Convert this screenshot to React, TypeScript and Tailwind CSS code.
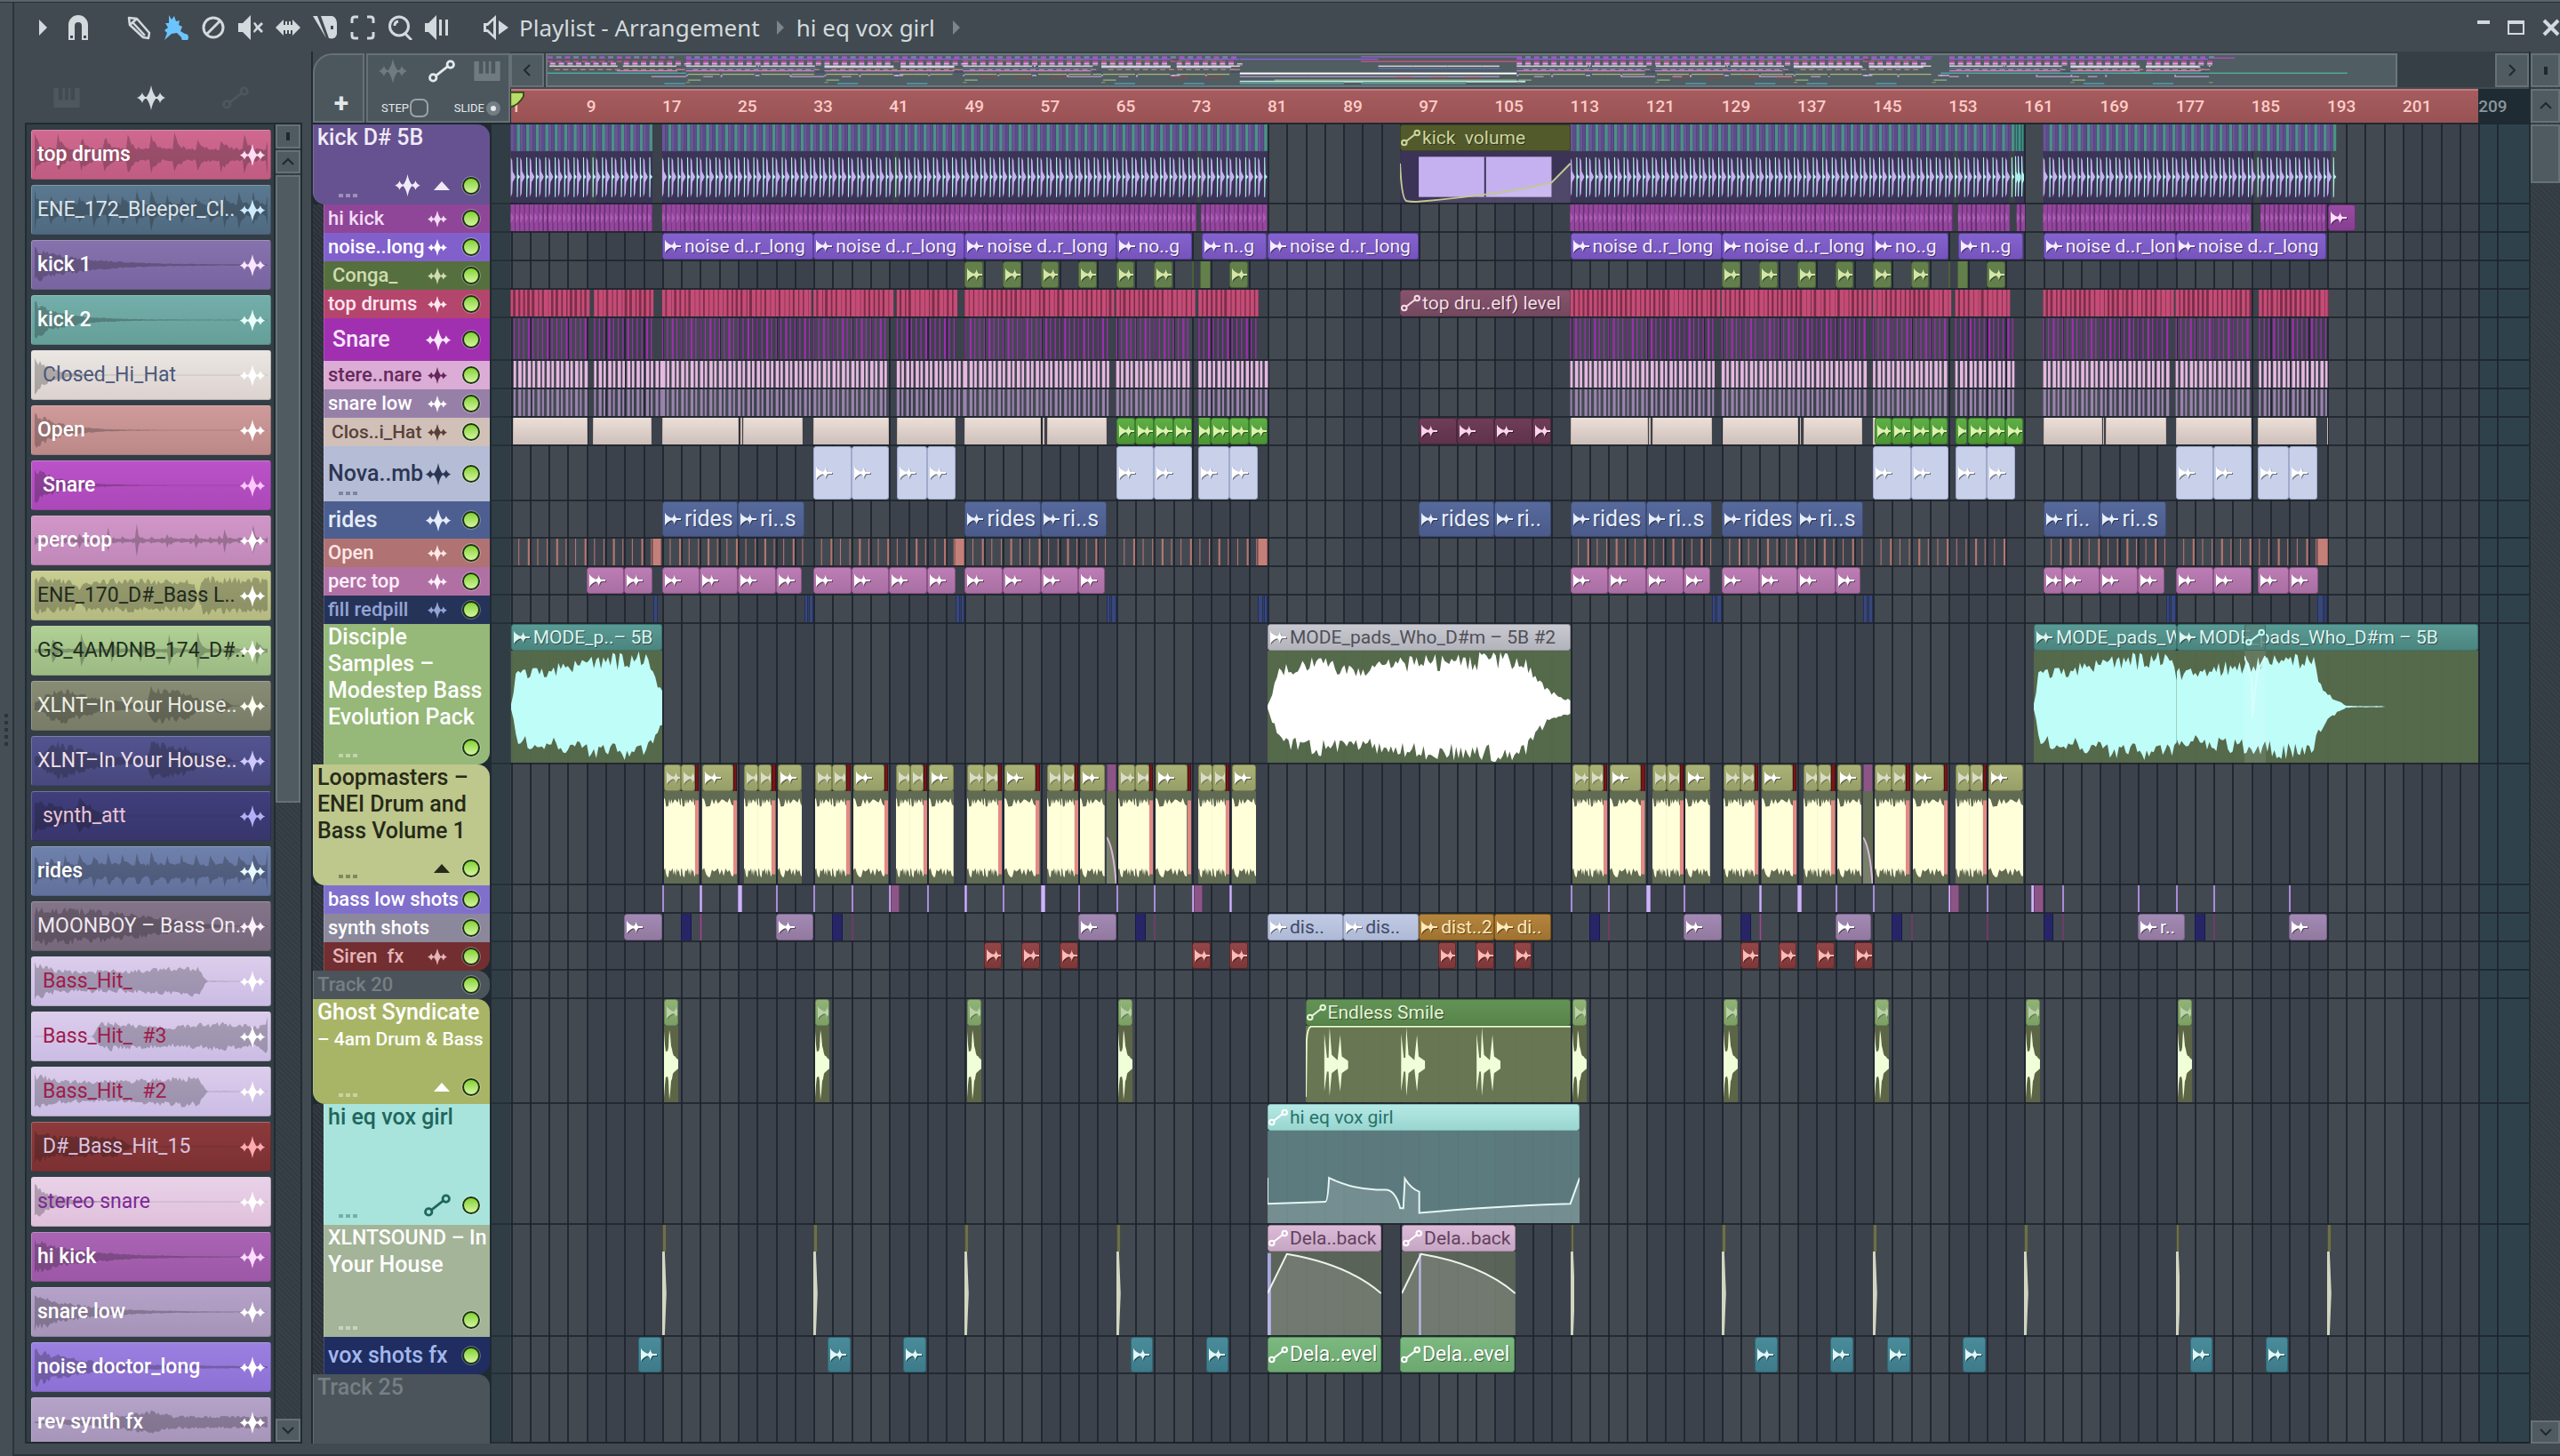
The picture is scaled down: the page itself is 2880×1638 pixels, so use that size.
import React, { useState } from 'react';
import clsx from 'clsx';

// The lane shows this many bars from edge to edge
const SPAN = 213.4;

type Clip = {
    s: number;
    e: number;
    label?: string;
    tone: string;
    icon?: 'wave' | 'auto' | 'faint';
    body?: 'pad' | 'padCut' | 'padEnd' | 'pad2' | 'loop' | 'ghost' | 'smile' | 'eq' | 'delay' | 'delay2' | 'kickvol' | 'kickfill' | 'xlnt' | 'red' | 'fade' | 'dip';
};

type Track = {
    name: string;
    lines?: { text: string; size: string }[];
    height: string;
    bg: string;
    text: string;
    child?: boolean;
    big?: boolean;
    round?: string;
    wave?: boolean;
    auto?: boolean;
    arrow?: boolean;
    dots?: boolean;
    noLed?: boolean;
    pad?: boolean;
    mini: string;
    dense?: 'kick' | 'hikick' | 'drums' | 'snare' | 'stereo' | 'low' | 'open';
    segs?: number[][];
    clips?: Clip[];
};

const repeat = (list: number[][], base: Omit<Clip, 's' | 'e'>): Clip[] => list.map(([s, e]) => ({ s, e, ...base }));

// Bar 1 starts a hair inside the lane
const place = (s: number, e: number) => ({
    left: `${((s - 0.94) / SPAN) * 100}%`,
    width: `${((e - s) / SPAN) * 100}%`,
});

// Cheap repeatable noise, so the wave forms stay the same between renders
const noise = (seed: number) => {
    let n = seed * 7919 + 17;
    return () => {
        n = (n * 16807) % 2147483647;
        return n / 2147483647;
    };
};

const wavePath = (seed: number, steps: number, env: (t: number) => number, rough = 0.35) => {
    const rnd = noise(seed);
    const top: string[] = [];
    const bottom: string[] = [];
    for (let i = 0; i <= steps; i++) {
        const t = i / steps;
        const a = env(t) * (1 - rough * rnd()) * 50;
        const b = env(t) * (1 - rough * rnd()) * 50;
        const x = ((i / steps) * 100).toFixed(2);
        top.push(`${x},${(50 - a).toFixed(1)}`);
        bottom.unshift(`${x},${(50 + b).toFixed(1)}`);
    }
    return `M${top.join('L')}L${bottom.join('L')}Z`;
};

const decay = (k: number, base = 0.02) => (t: number) => Math.exp(-t * k) * 0.9 + base;

const points = (list: number[][]) => (t: number) => {
    for (let i = 1; i < list.length; i++) {
        if (t <= list[i][0]) {
            const [x0, y0] = list[i - 1];
            const [x1, y1] = list[i];
            return y0 + ((t - x0) / (x1 - x0 || 1)) * (y1 - y0);
        }
    }
    return list[list.length - 1][1];
};

const hits = (n: number, base: number) => (t: number) => base + (1 - base) * Math.exp(-((t * n) % 1) * 5);

/* ---------- icons ---------- */

const WaveIcon = ({ className }: { className?: string }) => (
    <svg viewBox="0 0 32 28" className={className} fill="currentColor" aria-hidden="true">
        <path d="M16 0Q17.6 9 22 14Q17.6 19 16 28Q14.4 19 10 14Q14.4 9 16 0Z" />
        <path d="M6 8Q7 12.2 11 14Q7 15.8 6 20Q4.8 15.8 0 14Q4.8 12.2 6 8ZM26 8Q25 12.2 21 14Q25 15.8 26 20Q27.2 15.8 32 14Q27.2 12.2 26 8Z" />
        <rect x="4" y="13" width="24" height="2" />
    </svg>
);

const ClipIcon = ({ className }: { className?: string }) => (
    <svg viewBox="0 0 20 16" className={clsx('shrink-0 drop-shadow-[1px_1px_0_rgba(0,0,0,0.45)]', className)} fill="currentColor" aria-hidden="true">
        <path d="M0 0Q3 5 9 7V9Q3 11 0 16Z" />
        <path d="M12 1Q13 6 15 7H20V9H15Q13 10 12 15Q11 10 8 9V7Q11 6 12 1Z" />
    </svg>
);

const NodeIcon = ({ className }: { className?: string }) => (
    <svg viewBox="0 0 32 28" className={className} fill="none" stroke="currentColor" strokeWidth="3" aria-hidden="true">
        <circle cx="5.5" cy="22" r="4" />
        <circle cx="26.5" cy="6" r="4" />
        <path d="M9 19.5L23 8.5" />
    </svg>
);

const PianoIcon = ({ className }: { className?: string }) => (
    <svg viewBox="0 0 32 24" className={className} fill="currentColor" aria-hidden="true">
        <path d="M0 0H6V15H11V0H14V15H18V0H21V15H26V0H32V24H0Z" />
    </svg>
);

const tools = [
    { name: 'Snap', gap: 'mr-[40px]', art: <path d="M3 28V11A10.5 10.5 0 0 1 25 11V28H18V12A4 4 0 0 0 10 12V28ZM5 23V26H8V23ZM20 23V26H23V23Z" fillRule="evenodd" /> },
    { name: 'Draw', gap: 'mr-[14px]', art: <path d="M3 3L12 4L26 20L25 26L19 25L4 11ZM8 9L21 23M12 4L4 11" fill="none" stroke="currentColor" strokeWidth="2.5" strokeLinejoin="round" /> },
    { name: 'Paint', gap: 'mr-[14px]', blue: true, art: <path d="M6 0L9 5L12 1L14 7L18 6L17 11L21 13L19 18L24 21A4 4 0 1 1 20 25L15 20L9 21L1 28L4 20L1 17L5 14L2 9L6 9Z" /> },
    { name: 'Delete', gap: 'mr-[14px]', art: <path d="M14 3A11 11 0 1 1 14 25A11 11 0 1 1 14 3M6 22L22 6" fill="none" stroke="currentColor" strokeWidth="3" /> },
    { name: 'Mute', gap: 'mr-[14px]', art: <path d="M0 9H5L14 0V28L5 19H0ZM17 9L19 8L22 12L26 8L28 10L24 14L28 18L26 20L22 16L18 20L17 18L20 14Z" /> },
    { name: 'Slip', gap: 'mr-[14px]', art: <path d="M0 14L9 5V11H11V7H13V11H15V7H17V11H19V5L28 14L19 23V17H17V21H15V17H13V21H11V17H9V23Z" /> },
    { name: 'Slice', gap: 'mr-[14px]', art: <path d="M0 1H5L15 26ZM9 1H22Q27 3 27 10V21Q26 28 18 26ZM20 12V16H23V12Z" fillRule="evenodd" /> },
    { name: 'Select', gap: 'mr-[14px]', art: <path d="M2 9V5Q2 2 5 2H9M19 2H23Q26 2 26 5V9M26 19V23Q26 26 23 26H19M9 26H5Q2 26 2 23V19" fill="none" stroke="currentColor" strokeWidth="3" /> },
    { name: 'Zoom', gap: 'mr-[14px]', art: <path d="M13 2A10 10 0 1 1 13 23A10 10 0 1 1 13 2M20 21L27 28M8 12A5 5 0 0 1 12 7" fill="none" stroke="currentColor" strokeWidth="3" /> },
    { name: 'Playback', gap: 'mr-[38px]', art: <path d="M0 9H4L13 0V28L4 19H0ZM16 5H19V23H16ZM23 5H26V23H23Z" /> },
    { name: 'Options', gap: 'mr-0', art: <path d="M0 9H4L14 0V28L4 19H0ZM3 12V16H5L11 22V6L5 12ZM17 6L28 14L17 22Z" fillRule="evenodd" /> },
];

/* ---------- sample browser ---------- */

const samples = [
    { name: 'top drums', look: 'from-[#d06890] to-[#bf5c80] text-white', icon: 'text-[#ffdcf5]', env: hits(10, 0.3), bold: true },
    { name: 'ENE_172_Bleeper_Cl..', look: 'from-[#5a7890] to-[#4f6a80] text-[#dfe5ea]', icon: 'text-[#cdeaff]', env: hits(16, 0.3) },
    { name: 'kick 1', look: 'from-[#8672ac] to-[#7864a0] text-white', icon: 'text-[#fbe4ff]', env: decay(5), bold: true },
    { name: 'kick 2', look: 'from-[#74aeaa] to-[#649f99] text-white', icon: 'text-[#eafffb]', env: decay(8), bold: true },
    { name: 'Closed_Hi_Hat', look: 'from-[#eae6e2] to-[#dcd3cf] text-[#4c587c]', icon: 'text-white', env: decay(14, 0.01), pad: true },
    { name: 'Open', look: 'from-[#cf9a9a] to-[#bd8888] text-white', icon: 'text-white', env: decay(9, 0.01), bold: true },
    { name: 'Snare', look: 'from-[#bb52c8] to-[#ab48b8] text-white', icon: 'text-[#ffc6ff]', env: decay(9, 0.01), pad: true, bold: true },
    { name: 'perc top', look: 'from-[#d096c8] to-[#c088b8] text-white', icon: 'text-white', env: (t: number) => 0.08 + 0.9 * Math.exp(-((t * 8 + 0.5) % 1) * 22) + 0.15 * Math.exp(-((t * 24) % 1) * 5), bold: true },
    { name: 'ENE_170_D#_Bass L..', look: 'from-[#c8ce90] to-[#b4ba80] text-[#1f2a20]', icon: 'text-white', env: points([[0, 0.9], [0.18, 0.7], [0.19, 0.3], [0.22, 0.8], [0.68, 0.75], [0.7, 0.05], [0.72, 0.9], [1, 0.8]]) },
    { name: 'GS_4AMDNB_174_D#..', look: 'from-[#b0d094] to-[#9cba84] text-[#1f3020]', icon: 'text-white', env: (t: number) => 0.1 + 0.8 * Math.exp(-((t * 8 + 0.4) % 1) * 10) },
    { name: 'XLNT–In Your House..', look: 'from-[#888c74] to-[#787c68] text-[#eceee4]', icon: 'text-[#fffff0]', env: points([[0, 0.2], [0.1, 0.9], [0.3, 0.3], [0.48, 0.1], [0.5, 0.9], [0.65, 0.7], [0.75, 0.1], [0.8, 0.4], [0.85, 0.02], [1, 0.02]]) },
    { name: 'XLNT–In Your House..', look: 'from-[#525490] to-[#48487e] text-[#eedfe8]', icon: 'text-[#cfc8ff]', env: points([[0, 0.2], [0.1, 0.9], [0.3, 0.3], [0.48, 0.1], [0.5, 0.9], [0.65, 0.7], [0.75, 0.1], [0.8, 0.4], [0.85, 0.02], [1, 0.02]]) },
    { name: 'synth_att', look: 'from-[#403e7c] to-[#38366c] text-[#e8c4d4]', icon: 'text-[#b4b0f8]', env: points([[0, 0.9], [0.1, 0.5], [0.17, 0.3], [0.19, 0.9], [0.3, 0.1], [0.35, 0.01], [1, 0.01]]), pad: true },
    { name: 'rides', look: 'from-[#6e80ac] to-[#61719c] text-white', icon: 'text-[#e8f8ff]', env: hits(16, 0.35), bold: true },
    { name: 'MOONBOY – Bass On..', look: 'from-[#84748a] to-[#77687c] text-[#f1e8ef]', icon: 'text-[#fff0fa]', env: points([[0, 0.9], [0.25, 0.8], [0.5, 0.5], [0.7, 0.15], [0.85, 0.03], [1, 0.02]]) },
    { name: 'Bass_Hit_', look: 'from-[#dccdec] to-[#cbbce4] text-[#a01c4c]', icon: 'text-white', env: points([[0, 0.9], [0.1, 0.55], [0.4, 0.55], [0.7, 0.75], [0.74, 0.02], [1, 0.01]]), pad: true },
    { name: 'Bass_Hit_  #3', look: 'from-[#dccdec] to-[#cbbce4] text-[#a01c4c]', icon: 'text-white', env: points([[0, 0.01], [0.25, 0.01], [0.28, 0.7], [0.6, 0.5], [0.8, 0.7], [0.96, 0.5], [1, 0.9]]), pad: true },
    { name: 'Bass_Hit_  #2', look: 'from-[#dccdec] to-[#cbbce4] text-[#a01c4c]', icon: 'text-white', env: points([[0, 0.9], [0.1, 0.55], [0.4, 0.55], [0.7, 0.75], [0.74, 0.02], [1, 0.01]]), pad: true },
    { name: 'D#_Bass_Hit_15', look: 'from-[#8c3a3c] to-[#7c3032] text-[#d8c4e0]', icon: 'text-[#ffaab0]', env: points([[0, 0.8], [0.1, 0.5], [0.35, 0.5], [0.42, 0.02], [1, 0.01]]), pad: true },
    { name: 'stereo snare', look: 'from-[#e8d2e8] to-[#e0c0dc] text-[#7c2898]', icon: 'text-white', env: decay(12, 0.01) },
    { name: 'hi kick', look: 'from-[#a964b4] to-[#9c58a6] text-white', icon: 'text-[#ffdcff]', env: decay(5, 0.01), bold: true },
    { name: 'snare low', look: 'from-[#b4a2c8] to-[#a693b8] text-white', icon: 'text-white', env: decay(5, 0.01), bold: true },
    { name: 'noise doctor_long', look: 'from-[#9c80e0] to-[#8c70d4] text-white', icon: 'text-white', env: decay(5, 0.05), bold: true },
    { name: 'rev synth fx', look: 'from-[#b4a2c8] to-[#a693b8] text-white', icon: 'text-white', env: points([[0, 0.04], [0.25, 0.2], [0.5, 0.55], [0.6, 0.3], [1, 0.3]]), bold: true },
];

/* ---------- tracks ---------- */

const kickSegs = [[1, 9.4], [10, 16], [17, 41.4], [42, 73.5], [74, 81], [113, 153.5], [154, 159.4], [163, 185.1], [186, 193.4]];
const drumSegs = [[1, 9.3], [9.8, 16], [17, 32.7], [33, 41.3], [41.8, 48], [49, 64.8], [65, 73.2], [73.7, 80], [113, 128.8], [129, 144.8], [145, 153.2], [153.7, 159.4], [163, 176.7], [177, 185], [185.8, 193.2]];
const snareSegs = [[1.3, 9.2], [9.8, 16], [17, 32.6], [33, 41], [41.8, 48], [49, 64.5], [65, 73], [73.7, 80], [113, 128.5], [129, 144.4], [145, 153], [153.7, 160], [163, 176.5], [177, 185], [185.8, 193]];
const stereoSegs = [[1.3, 9.2], [9.8, 17], [17, 32.6], [33, 41], [41.8, 49], [49, 64.5], [65, 73], [73.7, 81], [113, 128.5], [129, 144.4], [145, 153], [153.7, 160], [163, 176.5], [177, 185], [185.8, 193]];
const openSegs = [[1.8, 16], [17.8, 32], [33.8, 48], [49.8, 64], [65.8, 80], [113.8, 128], [129.8, 144], [145.8, 159], [163.8, 176], [177.8, 192]];

const purple = 'border-[#5b3fa4] bg-linear-to-b from-[#8563cf] to-[#7654bb] text-[#f4ecff]';
const conga = 'border-[#4b6138] bg-[#627f4c] text-[#d3e6a8]';
const cream = 'border-[#c9b8b0] bg-linear-to-b from-[#ecdfd8] to-[#cdbfb9] text-white';
const green = 'border-[#3b7f2c] bg-linear-to-b from-[#5fae45] to-[#4c9534] text-[#dcf3b0]';
const maroon = 'border-[#4c2740] bg-linear-to-b from-[#6e3d58] to-[#60324c] text-[#fcd3ec]';
const pale = 'border-[#a0abca] bg-[#c8d0ea] text-white';
const blue = 'border-[#3b4b78] bg-linear-to-b from-[#566a9b] to-[#4b5b8b] text-[#e7eefc]';
const salmon = 'border-[#a2605c] bg-[#c28079] text-white';
const pink = 'border-[#8a5285] bg-linear-to-b from-[#bc7db4] to-[#a96fa3] text-white';
const navy = 'border-[#22305f] bg-[#38477b] text-white';
const teal = 'border-[#3a7470] bg-linear-to-b from-[#5a9a94] to-[#4b857f] text-[#dcf5ef]';
const silver = 'border-[#94949c] bg-linear-to-b from-[#c9c9d1] to-[#b3b3bc] text-[#4f5058]';
const olive = 'border-[#7b814d] bg-linear-to-b from-[#abb277] to-[#969f68] text-white';
const red = 'border-[#4c0e12] bg-[#7b1519] text-white';
const mauve = 'border-[#6c3c6c] bg-[#8b5585] text-[#c99ac4]';
const lilac = 'border-[#a98cd8] bg-[#cbb6f5] text-white';
const synth = 'border-[#76628c] bg-linear-to-b from-[#a28ab4] to-[#93799f] text-white';
const indigo = 'border-[#161a4a] bg-[#272566] text-[#6a6cb0]';
const dist = 'border-[#8f9bbd] bg-linear-to-b from-[#c2cbe4] to-[#aeb9d6] text-[#414a69]';
const gold = 'border-[#7a5518] bg-linear-to-b from-[#b3853e] to-[#a07230] text-[#ffe9b8]';
const siren = 'border-[#5f2728] bg-linear-to-b from-[#934648] to-[#7d3738] text-[#ffb9b6]';
const leaf = 'border-[#668a52] bg-linear-to-b from-[#92b377] to-[#7c9f64] text-[#dcecd0]';
const forest = 'border-[#42703a] bg-linear-to-b from-[#639257] to-[#588449] text-[#e6f5d8]';
const aqua = 'border-[#82bdb8] bg-linear-to-b from-[#b6e9e5] to-[#99d5d0] text-[#27736c]';
const rose = 'border-[#a883a4] bg-linear-to-b from-[#dbbbd8] to-[#c6a7c3] text-[#63405f]';
const mint = 'border-[#4f8f54] bg-linear-to-b from-[#7bb980] to-[#6ca86f] text-white';
const sea = 'border-[#2c6878] bg-linear-to-b from-[#4a8c9b] to-[#3e7b8a] text-[#dff7f7]';
const moss = 'border-[#4a4d35] bg-[#6c6f50] text-white';
const violet = 'border-[#6a2f74] bg-linear-to-b from-[#9a4ba4] to-[#863f90] text-[#ffdcff]';

const loopGroup = (b: number, last = 14.8): Clip[] => [
    { s: b + 0.2, e: b + 2, tone: olive, icon: 'faint', body: 'loop' },
    { s: b + 2, e: b + 3.5, tone: olive, icon: 'faint', body: 'loop' },
    { s: b + 3.5, e: b + 3.9, tone: red, body: 'red' },
    { s: b + 4.2, e: b + 7.5, tone: olive, icon: 'wave', body: 'loop' },
    { s: b + 7.5, e: b + 7.9, tone: red, body: 'red' },
    { s: b + 8.7, e: b + 10.2, tone: olive, icon: 'faint', body: 'loop' },
    { s: b + 10.2, e: b + 11.6, tone: olive, icon: 'faint', body: 'loop' },
    { s: b + 11.6, e: b + 12, tone: red, body: 'red' },
    { s: b + 12.2, e: b + last, tone: olive, icon: 'wave', body: 'loop' },
];

const at = (starts: number[], w: number) => starts.map((s) => [s, s + w]);

const tracks: Track[] = [
    {
        name: 'kick D# 5B', height: 'h-[90px]', bg: 'bg-[#665290]', text: 'text-[#f0eaf8]', big: true, round: 'rounded-tr-[14px] rounded-bl-[14px]', wave: true, arrow: true, dots: true, mini: '#9a62c8',
        dense: 'kick', segs: kickSegs,
        clips: [
            { s: 95, e: 113, label: 'kick  volume', tone: 'border-[#3d441f] bg-[#525a2c] text-[#ccd49c]', icon: 'auto', body: 'kickvol' },
            ...repeat([[160, 160.32], [160.32, 160.66], [160.66, 161]], { tone: 'border-[#2d6c66] bg-[#4a938a] text-white', body: 'kickfill' }),
        ],
    },
    {
        name: 'hi kick', height: 'h-[32px]', bg: 'bg-[#8f4698]', text: 'text-[#f3dcf6]', child: true, wave: true, mini: '#b050c0',
        dense: 'hikick', segs: [[1, 16], [17, 73.5], [74, 80.9], [113, 153.5], [154, 159.4], [160.2, 161], [163, 184.9], [186, 193]],
        clips: [{ s: 193.1, e: 196, tone: violet, icon: 'wave' }],
    },
    {
        name: 'noise..long', height: 'h-[32px]', bg: 'bg-[#8160cc]', text: 'text-white', child: true, wave: true, mini: '#8c60e0',
        clips: [
            ...repeat([[17, 33], [33, 49], [49, 65]], { label: 'noise d..r_long', tone: purple, icon: 'wave' }),
            { s: 65, e: 73, label: 'no..g', tone: purple, icon: 'wave' },
            { s: 74, e: 80.9, label: 'n..g', tone: purple, icon: 'wave' },
            ...repeat([[81, 97], [113, 129], [129, 145]], { label: 'noise d..r_long', tone: purple, icon: 'wave' }),
            { s: 145, e: 153, label: 'no..g', tone: purple, icon: 'wave' },
            { s: 154, e: 160.9, label: 'n..g', tone: purple, icon: 'wave' },
            ...repeat([[163, 177], [177, 192.9]], { label: 'noise d..r_long', tone: purple, icon: 'wave' }),
        ],
    },
    {
        name: 'Conga_', height: 'h-[32px]', bg: 'bg-[#566f3e]', text: 'text-[#cfdcb0]', child: true, wave: true, pad: true, mini: '#627f4c',
        clips: [
            ...repeat(at([49, 53, 57, 61, 65, 69, 77, 129, 133, 137, 141, 145, 149, 157], 1.95), { tone: conga, icon: 'wave' }),
            ...repeat([[73, 73.2], [73.9, 75], [153, 153.2], [153.9, 155]], { tone: conga }),
        ],
    },
    {
        name: 'top drums', height: 'h-[32px]', bg: 'bg-[#b4456c]', text: 'text-[#ffe6ee]', child: true, wave: true, mini: '#d05080',
        dense: 'drums', segs: drumSegs,
        clips: [{ s: 95, e: 113, label: 'top dru..elf) level', tone: 'border-[#6b4259] bg-linear-to-b from-[#86546c] to-[#744960] text-[#f3dbe6]', icon: 'auto' }],
    },
    { name: 'Snare', height: 'h-[48px]', bg: 'bg-[#a030b0]', text: 'text-[#fae6fc]', child: true, big: true, wave: true, pad: true, mini: '#c060d0', dense: 'snare', segs: snareSegs },
    { name: 'stere..nare', height: 'h-[32px]', bg: 'bg-[#dbacd5]', text: 'text-[#66285c]', child: true, wave: true, mini: '#e8c0e0', dense: 'stereo', segs: stereoSegs },
    { name: 'snare low', height: 'h-[32px]', bg: 'bg-[#9780a8]', text: 'text-white', child: true, wave: true, mini: '#a58cb8', dense: 'low', segs: stereoSegs },
    {
        name: 'Clos..i_Hat', height: 'h-[32px]', bg: 'bg-[#d0c0b8]', text: 'text-[#5a4038]', child: true, wave: true, pad: true, mini: '#e8dcd6',
        lines: [{ text: 'Clos..i_Hat', size: 'text-[21px]' }],
        clips: [
            ...repeat([[1.2, 9.1], [9.7, 15.9], [17, 25.1], [25.3, 25.45], [25.6, 31.9], [33, 41], [41.8, 48], [49, 57], [57.2, 57.4], [57.7, 64], [113, 121.2], [121.35, 121.5], [121.7, 128], [129.1, 137.1], [137.25, 137.4], [137.7, 143.9], [145, 145.3], [163, 169.2], [169.3, 169.45], [169.6, 176], [177, 185], [185.7, 191.9], [193, 193.15]], { tone: cream }),
            ...repeat([[65, 67], [67, 69], [69, 71], [71, 73], [73.7, 75], [75, 77], [77, 79], [79, 81], [145.2, 147], [147, 149], [149, 151], [151, 152.9], [153.7, 155], [155, 157], [157, 159], [159, 160.9]], { tone: green, icon: 'wave' }),
            ...repeat([[97, 101], [101, 105], [105, 109], [109, 111]], { tone: maroon, icon: 'wave' }),
        ],
    },
    {
        name: 'Nova..mb', height: 'h-[62px]', bg: 'bg-[#b4bcd6]', text: 'text-[#2c3654]', child: true, big: true, wave: true, dots: true, mini: '#c8d0ea',
        clips: repeat([[33, 37], [37, 41], [41.8, 45], [45, 48], [65, 69], [69, 73], [73.7, 77], [77, 80], [145, 149], [149, 153], [153.7, 157], [157, 160], [177, 181], [181, 185], [185.7, 189], [189, 192]], { tone: pale, icon: 'wave' }),
    },
    {
        name: 'rides', height: 'h-[42px]', bg: 'bg-[#4c5f90]', text: 'text-[#e6ecf8]', child: true, big: true, wave: true, mini: '#5a74b0',
        clips: [
            ...repeat([[17, 25], [49, 57], [97, 105], [113, 121], [129, 137]], { label: 'rides', tone: blue, icon: 'wave' }),
            ...repeat([[25, 32], [57, 64], [121, 128], [137, 144], [169, 176]], { label: 'ri..s', tone: blue, icon: 'wave' }),
            ...repeat([[105, 111], [163, 169]], { label: 'ri..', tone: blue, icon: 'wave' }),
        ],
    },
    {
        name: 'Open', height: 'h-[32px]', bg: 'bg-[#b07272]', text: 'text-[#ffe8e6]', child: true, wave: true, mini: '#c28079',
        dense: 'open', segs: openSegs,
        clips: repeat([[16, 16.9], [47.9, 49], [80, 81], [192, 193.1]], { tone: salmon }),
    },
    {
        name: 'perc top', height: 'h-[32px]', bg: 'bg-[#b070a4]', text: 'text-[#fff0fc]', child: true, wave: true, mini: '#cc80c0',
        clips: repeat([[9, 13], [13, 16], [17, 21], [21, 25], [25, 29], [29, 31.8], [33, 37], [37, 41], [41, 45], [45, 48], [49, 53], [53, 57], [57, 61], [61, 63.8], [113, 117], [117, 121], [121, 125], [125, 127.8], [129, 133], [133, 137], [137, 141], [141, 143.7], [163, 165], [165, 169], [169, 173], [173, 175.8], [177, 181], [181, 185], [185.7, 189], [189, 192.1]], { tone: pink, icon: 'wave' }),
    },
    {
        name: 'fill redpill', height: 'h-[32px]', bg: 'bg-[#263358]', text: 'text-[#94a4d4]', child: true, wave: true, mini: '#38477b',
        clips: repeat([[16.1, 16.5], [32, 32.4], [32.5, 33], [48, 48.5], [48.6, 49], [64, 64.4], [64.5, 65], [80, 80.5], [80.6, 81], [128, 128.4], [128.5, 129], [144, 144.4], [144.5, 145], [176, 176.4], [176.5, 177], [192, 192.6], [192.7, 193]], { tone: navy }),
    },
    {
        name: 'Disciple Samples – Modestep Bass Evolution Pack', height: 'h-[158px]', bg: 'bg-[#96b878]', text: 'text-white', child: true, big: true, dots: true, round: 'rounded-br-[14px]', mini: '#52b0a4',
        clips: [
            { s: 1, e: 17, label: 'MODE_p..– 5B', tone: teal, icon: 'wave', body: 'pad' },
            { s: 81, e: 113, label: 'MODE_pads_Who_D#m – 5B #2', tone: silver, icon: 'wave', body: 'pad2' },
            { s: 162, e: 177.1, label: 'MODE_pads_Who_D#m', tone: teal, icon: 'wave', body: 'padCut' },
            { s: 177.1, e: 209, label: 'MODE_pads_Who_D#m – 5B', tone: teal, icon: 'wave', body: 'padEnd' },
            { s: 184.3, e: 186.5, tone: 'border-[#3a6c68] bg-[#55837c]/80 text-[#c2fcf8]', icon: 'auto', body: 'dip' },
        ],
    },
    {
        name: 'Loopmasters – ENEI Drum and Bass Volume 1', height: 'h-[136px]', bg: 'bg-[#bec78c]', text: 'text-[#262a18]', big: true, arrow: true, dots: true, round: 'rounded-tr-[14px] rounded-bl-[14px]', mini: '#abb277',
        clips: [
            ...loopGroup(17),
            ...loopGroup(33),
            ...loopGroup(49),
            { s: 64, e: 65, tone: mauve, body: 'fade' },
            ...loopGroup(65),
            ...loopGroup(113),
            ...loopGroup(129),
            { s: 144, e: 145, tone: mauve, body: 'fade' },
            ...loopGroup(145, 15.9),
        ],
    },
    {
        name: 'bass low shots', height: 'h-[32px]', bg: 'bg-[#8070cc]', text: 'text-white', child: true, mini: '#cbb6f5',
        clips: [
            ...repeat(at([17, 21, 29, 33, 37, 45, 49, 53, 61, 65, 69, 77, 113, 117, 125, 133, 141, 145, 157, 165, 173, 177, 181, 189], 0.2), { tone: lilac }),
            ...repeat(at([25, 41, 57, 73, 121, 137, 153, 161.7], 0.5), { tone: lilac }),
            ...repeat([[41.2, 42.1], [73.2, 74.1], [153.2, 154.1], [162, 163]], { tone: mauve }),
        ],
    },
    {
        name: 'synth shots', height: 'h-[32px]', bg: 'bg-[#8c889c]', text: 'text-white', child: true, mini: '#b49ac8',
        clips: [
            ...repeat([[13, 17], [29, 33], [61, 65], [125, 129], [141, 144.8], [189, 193]], { tone: synth, icon: 'wave' }),
            { s: 173, e: 178, label: 'r..', tone: synth, icon: 'wave' },
            ...repeat(at([19, 35, 67, 115, 131, 147, 163, 179], 1.1), { tone: indigo }),
            ...repeat(at([21, 37, 69, 117, 133, 149, 157, 165, 181], 0.2), { tone: mauve }),
            ...repeat([[81, 89], [89, 97]], { label: 'dis..', tone: dist, icon: 'wave' }),
            { s: 97, e: 105, label: 'dist..2', tone: gold, icon: 'wave' },
            { s: 105, e: 111, label: 'di..', tone: gold, icon: 'wave' },
        ],
    },
    {
        name: 'Siren  fx', height: 'h-[32px]', bg: 'bg-[#722e30]', text: 'text-[#e4b4b8]', child: true, wave: true, pad: true, round: 'rounded-br-[14px]', mini: '#934648',
        clips: repeat(at([51, 55, 59, 73, 77, 99, 103, 107, 131, 135, 139, 143], 1.95), { tone: siren, icon: 'wave' }),
    },
    { name: 'Track 20', height: 'h-[32px]', bg: 'bg-[#4a545a]', text: 'text-[#767f84]', round: 'rounded-r-[14px]', mini: '#4a545a' },
    {
        name: 'Ghost Syndicate – 4am Drum & Bass', height: 'h-[118px]', bg: 'bg-[#a9b566]', text: 'text-white', big: true, arrow: true, dots: true, round: 'rounded-tr-[14px] rounded-bl-[14px]', mini: '#92b377',
        lines: [{ text: 'Ghost Syndicate', size: 'text-[25px]' }, { text: '– 4am Drum & Bass', size: 'text-[21px]' }],
        clips: [
            ...repeat(at([17.2, 33.2, 49.2, 65.2], 1.5), { tone: leaf, icon: 'faint', body: 'ghost' }),
            { s: 85, e: 113, label: 'Endless Smile', tone: forest, icon: 'auto', body: 'smile' },
            ...repeat(at([113.2, 129.2, 145.2, 161.2, 177.2], 1.5), { tone: leaf, icon: 'faint', body: 'ghost' }),
        ],
    },
    {
        name: 'hi eq vox girl', height: 'h-[136px]', bg: 'bg-[#a8e4dc]', text: 'text-[#1f665e]', child: true, big: true, auto: true, dots: true, mini: '#b6e9e5',
        clips: [{ s: 81, e: 114, label: 'hi eq vox girl', tone: aqua, icon: 'auto', body: 'eq' }],
    },
    {
        name: 'XLNTSOUND – In Your House', height: 'h-[126px]', bg: 'bg-[#a4b498]', text: 'text-white', child: true, big: true, dots: true, mini: '#8a8c70',
        lines: [{ text: 'XLNTSOUND – In', size: 'text-[23px]' }, { text: 'Your House', size: 'text-[25px]' }],
        clips: [
            ...repeat(at([17, 33, 49, 65, 113, 129, 145, 161, 177, 193], 0.45), { tone: moss, body: 'xlnt' }),
            { s: 81, e: 93, label: 'Dela..back', tone: rose, icon: 'auto', body: 'delay' },
            { s: 95.2, e: 107.2, label: 'Dela..back', tone: rose, icon: 'auto', body: 'delay2' },
        ],
    },
    {
        name: 'vox shots fx', height: 'h-[42px]', bg: 'bg-[#1f2d60]', text: 'text-[#a4b8ec]', child: true, big: true, round: 'rounded-br-[14px]', mini: '#4ca8c0',
        clips: [
            ...repeat(at([14.5, 34.5, 42.5, 66.5, 74.5, 132.5, 140.5, 146.5, 154.5, 178.5, 186.5], 2.4), { tone: sea, icon: 'wave' }),
            ...repeat([[81, 93], [95, 107.1]], { label: 'Dela..evel', tone: mint, icon: 'auto' }),
        ],
    },
    { name: 'Track 25', height: 'min-h-[78px] flex-1', bg: 'bg-[#4a545a]', text: 'text-[#767f84]', big: true, round: 'rounded-tr-[14px]', noLed: true, mini: '#4a545a' },
];

const drops = (segs: number[][], step: number) => {
    const out: number[] = [];
    segs.forEach(([a, b]) => {
        for (let t = a; t < b - 0.05; t += step) out.push(t);
    });
    return out;
};

const Dense = ({ kind, segs }: { kind: Track['dense']; segs: number[][] }) => {
    const rnd = noise(kind ? kind.length * 13 : 1);
    const xs = (step: number) => drops(segs, step);
    return (
        <svg viewBox={`0.94 0 ${SPAN} 100`} preserveAspectRatio="none" className="absolute inset-0 size-full" aria-hidden="true">
            {kind === 'kick' && segs.map(([a, b]) => <g key={a}><rect x={a} y="0" width={b - a} height="35" fill="#3d3f63" /><rect x={a} y="35" width={b - a} height="65" fill="#3b3457" /></g>)}
            {kind === 'kick' && xs(1).map((t) => (
                <g key={t}>
                    <rect x={t} width="0.3" height="34" fill="#6a5596" />
                    <rect x={t + 0.33} width="0.26" height="34" fill="#5f4c8c" />
                    <rect x={t + 0.64} width="0.33" height="34" fill="#4c9188" />
                    <path d={`M${t} 42L${t + 0.15} 46L${t + 0.2} 60L${t + 0.5} 67L${t + 0.2} 74L${t + 0.15} 88L${t} 93Z`} fill="#c6b1f0" />
                    <path d={`M${t + 0.64} 42L${t + 0.74} 42L${t + 0.78} 64L${t + 0.98} 67L${t + 0.78} 70L${t + 0.74} 93L${t + 0.64} 93Z`} fill="#aef3ea" />
                </g>
            ))}
            {kind === 'hikick' && segs.map(([a, b]) => <rect key={a} x={a} width={b - a} height="100" fill="#65306f" />)}
            {kind === 'hikick' && xs(0.5).map((t) => (
                <g key={t}>
                    <rect x={t} width={0.3 + rnd() * 0.14} height="100" fill="#96469f" />
                    <path d={`M${t} 30L${t + 0.35} 50L${t} 70Z`} fill="#ab5cb4" />
                </g>
            ))}
            {kind === 'drums' && segs.map(([a, b]) => <rect key={a} x={a} width={b - a} height="100" fill="#7b2e49" />)}
            {kind === 'drums' && xs(0.5).map((t) => <rect key={t} x={t} width={0.22 + rnd() * 0.24} height="100" fill="#c44c76" />)}
            {kind === 'snare' && xs(0.5).map((t, i) => <rect key={t} x={t} width={i % 4 === 3 ? 0.22 : 0.12} height="100" fill="#a02cb0" />)}
            {kind === 'stereo' && xs(0.5).map((t, i) => <rect key={t} x={t} width={i % 2 ? 0.34 : 0.26} height="100" fill="#e6b8e0" />)}
            {kind === 'low' && xs(0.5).map((t, i) => <rect key={t} x={t} width={i % 2 ? 0.3 : 0.2} height="100" fill="#9a83ad" />)}
            {kind === 'open' && xs(1).map((t, i) => <rect key={t} x={t} width={i % 3 === 1 ? 0.2 : 0.1} height="100" fill="#b67670" />)}
        </svg>
    );
};

const padEnv = points([[0, 0.05], [0.04, 0.75], [0.3, 0.8], [0.55, 0.95], [0.9, 1], [0.94, 0.65], [1, 0.35]]);
const padCutEnv = points([[0, 0.05], [0.04, 0.75], [0.3, 0.8], [0.55, 0.95], [0.95, 1], [1, 0.7]]);
const pad2Env = points([[0, 0.03], [0.04, 0.75], [0.15, 0.9], [0.3, 0.8], [0.5, 0.95], [0.85, 1], [0.88, 0.6], [0.93, 0.3], [1, 0.14]]);
const endEnv = points([[0, 0.7], [0.2, 0.85], [0.45, 1], [0.47, 0.6], [0.5, 0.25], [0.56, 0.02], [0.6, 0.01], [0.68, 0.01], [0.69, 0], [1, 0]]);
const ghostEnv = points([[0, 0.9], [0.1, 0.35], [0.3, 0.35], [0.38, 1], [0.5, 0.5], [0.65, 0.25], [1, 0.12]]);

const curve = (d: string, stroke: string) => (
    <path d={d} fill="none" stroke={stroke} strokeWidth="2" vectorEffect="non-scaling-stroke" />
);

const eqLine = 'M0 51V79L18.5 77Q19.3 77 19.7 51Q27 63 35 64L38 64Q41 65 42.5 84H43.5L44 52Q46 63 48.6 66V89Q70 82 97 79L100 51';

const bodies: Record<string, { bg: string; art: React.ReactNode }> = {
    pad: { bg: 'bg-[#566c4b]/95', art: <path d={wavePath(3, 64, padEnv, 0.34)} fill="#bffdf9" /> },
    padCut: { bg: 'bg-[#566c4b]/95', art: <path d={wavePath(3, 62, padCutEnv, 0.34)} fill="#bffdf9" /> },
    pad2: { bg: 'bg-[#566c4b]/95', art: <path d={wavePath(8, 130, pad2Env, 0.34)} fill="#ffffff" /> },
    padEnd: { bg: 'bg-[#566c4b]/95', art: <path d={wavePath(5, 130, endEnv, 0.34)} fill="#bffdf9" /> },
    loop: { bg: 'bg-[#616a52]', art: <path d={wavePath(4, 16, () => 0.92, 0.28)} fill="#ffffda" /> },
    red: { bg: 'bg-[#616a52]', art: <rect x="0" y="10" width="100" height="80" fill="#e38a86" /> },
    fade: {
        bg: 'bg-[#616a52]',
        art: <><path d="M0 50Q70 60 100 100H0Z" fill="#ffffff" fillOpacity="0.15" />{curve('M0 50Q70 60 100 100', '#d9b8da')}</>,
    },
    ghost: { bg: 'bg-[#5c6546]', art: <path d={wavePath(6, 16, ghostEnv, 0.12)} fill="#f1ffd8" /> },
    smile: {
        bg: 'bg-[#6b7954]/95',
        art: (
            <>
                {[7, 36, 64.5].map((x) => (
                    <path key={x} d={`M${x} 10L${x + 1} 42L${x + 1.6} 42L${x + 2} 2L${x + 2.8} 38L${x + 5} 45L${x + 6} 12L${x + 6.6} 40L${x + 9} 46V56L${x + 6.6} 62L${x + 6} 86L${x + 5} 56L${x + 2.8} 62L${x + 2} 92L${x + 1.6} 60L${x + 1} 60L${x} 86Z`} fill="#f1ffd8" />
                ))}
                {curve('M0 93L0.3 20Q0.6 2 2 1H100', '#e7f9c6')}
            </>
        ),
    },
    eq: {
        bg: 'bg-[#5f8183]/90',
        art: (
            <>
                <path d={`${eqLine}V100H0Z`} fill="#ffffff" fillOpacity="0.15" />
                {curve(eqLine, '#e6f6f4')}
            </>
        ),
    },
    delay: {
        bg: 'bg-[#5d675a]/90',
        art: (
            <>
                <rect x="0" y="2" width="3" height="98" fill="#a9a8e0" />
                <path d="M0 50L17 3Q70 15 100 50V100H0Z" fill="#ffffff" fillOpacity="0.14" />
                {curve('M0 50L17 3Q70 15 100 50', '#eff2ec')}
            </>
        ),
    },
    delay2: {
        bg: 'bg-[#5d675a]/90',
        art: (
            <>
                <rect x="15" y="2" width="2" height="98" fill="#a9a8e0" />
                <path d="M0 50L17 3Q70 15 100 50V100H0Z" fill="#ffffff" fillOpacity="0.14" />
                {curve('M0 50L17 3Q70 15 100 50', '#eff2ec')}
            </>
        ),
    },
    kickvol: {
        bg: 'bg-[#3b3457]/95',
        art: (
            <>
                <rect x="11" y="11" width="78" height="78" fill="#c6b1f0" />
                <path d="M50 11V89" stroke="#3b3457" strokeWidth="2" vectorEffect="non-scaling-stroke" />
                <path d="M11 98Q60 90 89 61L100 24V100H11Z" fill="#ffffff" fillOpacity="0.1" />
                {curve('M0 24Q1 96 4 97Q8 99 11 98Q60 84 89 61L100 24', '#c3c98f')}
            </>
        ),
    },
    kickfill: { bg: 'bg-[#3b3457]', art: <path d="M0 10H30L45 40L100 48V54L45 62L30 88H0Z" fill="#aef3ea" /> },
    xlnt: { bg: 'bg-transparent', art: <path d="M0 0H60L100 50L60 100H0Z" fill="#d3d6c0" /> },
    dip: { bg: 'bg-white/10', art: curve('M0 5L35 25L38 60L60 20L100 5', '#d8fffb') },
};

// Dark lettering on the light clips carries no shadow
const flat = [aqua, rose, silver, dist];

const ClipView = ({ clip, big }: { clip: Clip; big?: boolean }) => {
    const body = clip.body ? bodies[clip.body] : null;
    const wide = clip.e - clip.s > 1.3;
    const labelSize = big && !body ? (clip.icon === 'auto' ? 'text-[23px]' : 'text-[25px]') : 'text-[21px]';
    return (
        <div className="absolute inset-y-0 flex flex-col overflow-hidden" style={place(clip.s, clip.e)}>
            <div className={clsx('flex items-center overflow-hidden whitespace-pre', wide && clip.tone !== cream ? 'rounded-[3px] border' : 'border-x', clip.tone, body ? 'h-[30px] shrink-0' : 'flex-1', clip.icon === 'auto' ? 'gap-[2px]' : 'gap-1', clip.icon !== 'auto' && wide && 'pl-[2px]')}>
                {clip.icon === 'auto' && <NodeIcon className={clsx('h-[20px] w-[22px] shrink-0', flat.includes(clip.tone) && 'text-white')} />}
                {clip.icon === 'wave' && <ClipIcon className={clsx('h-[18px] w-[18px]', flat.includes(clip.tone) && 'text-white')} />}
                {clip.icon === 'faint' && <ClipIcon className="h-[18px] w-[18px] opacity-60" />}
                {clip.label && <span className={clsx('leading-[28px]', labelSize, !flat.includes(clip.tone) && 'text-shadow-[1px_1px_0_rgba(0,0,0,0.45)]')}>{clip.label}</span>}
            </div>
            {body && (
                <div className={clsx('relative flex-1 overflow-hidden', body.bg)}>
                    <svg viewBox="0 0 100 100" preserveAspectRatio="none" className="absolute inset-0 size-full" aria-hidden="true">{body.art}</svg>
                </div>
            )}
        </div>
    );
};

const Led = ({ name }: { name: string }) => {
    const [on, setOn] = useState(true);
    return (
        <button
            type="button"
            aria-label={`Mute ${name}`}
            aria-pressed={!on}
            onClick={() => setOn(!on)}
            className={clsx('size-[20px] shrink-0 rounded-full border-2 border-[#1c3414] outline outline-white/30', on ? 'bg-linear-to-b from-[#84d22c] to-[#d4f59c]' : 'bg-[#3f4a3a]')}
        />
    );
};

const TrackHeader = ({ track }: { track: Track }) => {
    const tall = track.dots && track.name !== 'Nova..mb';
    return (
        <div className="flex w-[222px] shrink-0 bg-[#1f2a32]">
            {track.child && <div className="w-[12px] shrink-0 bg-[repeating-linear-gradient(45deg,#2b3138_0_2px,#333a41_2px_4px)]" />}
            <div className={clsx('relative min-w-0 flex-1 border-l border-white/15', track.bg, track.text, track.round)}>
                <div className={clsx('flex h-full pl-1', tall || track.noLed ? 'items-start' : 'items-center')}>
                    {track.lines ? (
                        <span className={clsx('flex flex-col font-medium whitespace-nowrap', track.pad && 'pl-1')}>
                            {track.lines.map((line) => <span key={line.text} className={clsx('leading-[30px]', line.size)}>{line.text}</span>)}
                        </span>
                    ) : (
                        <span className={clsx('font-medium', track.big ? 'text-[25px] leading-[30px]' : 'text-[22px] leading-[30px]', track.pad && 'pl-[5px]', tall ? 'mr-px' : 'whitespace-pre')}>{track.name}</span>
                    )}
                </div>
                {!track.noLed && (
                    <div className={clsx('absolute right-[11px] flex items-center', tall ? 'bottom-[9px]' : 'inset-y-0')}>
                        {track.wave && <WaveIcon className={track.name === 'kick D# 5B' ? 'mr-[14px] h-[25px] w-[31px]' : track.big ? 'mr-[12px] h-[25px] w-[30px]' : 'mr-[16px] h-[19px] w-[24px]'} />}
                        {track.auto && <NodeIcon className="mr-[12px] h-[26px] w-[32px]" />}
                        {track.arrow && <span className="mr-[14px] border-x-[9px] border-b-[10px] border-x-transparent border-b-current" />}
                        <Led name={track.name} />
                    </div>
                )}
                {track.dots && (
                    <span className={clsx('absolute flex gap-[3px] opacity-40', track.child ? 'left-[16px]' : 'left-[28px]', track.name === 'Nova..mb' ? 'bottom-[7px]' : 'bottom-[8px]')}>
                        <i className="h-1 w-[5px] bg-current" />
                        <i className="h-1 w-[5px] bg-current" />
                        <i className="h-1 w-[5px] bg-current" />
                    </span>
                )}
            </div>
            <div className="ml-[2px] w-[21px] shrink-0 border-b-2 border-[#262f37] bg-[#303d44]" />
        </div>
    );
};

const gridCells = Array.from({ length: 106 }, (_, i) => i * 2 + 1);
const rulerBars = Array.from({ length: 27 }, (_, i) => i * 8 + 1);

const Overview = () => (
    <svg viewBox="1 0 213.6 26" preserveAspectRatio="none" className="size-full" role="img" aria-label="Arrangement overview">
        {tracks.map((track, i) => (
            <g key={track.name} fill={track.mini}>
                {(track.segs ?? []).map(([a, b]) =>
                    drops([[a, b]], 1).map((t, k) => (
                        <rect key={t} x={t} y={i + 1} width="0.6" height={track.dense === 'kick' ? 1.8 : 1} fill={track.dense === 'kick' && k % 2 ? '#58a89c' : track.mini} />
                    )),
                )}
                {(track.clips ?? []).map((c) => <rect key={`${c.s}-${c.e}`} x={c.s} y={i + 1} width={c.e - c.s} height={c.body === 'eq' || c.body === 'pad2' ? 1.5 : 1} fill={c.body === 'pad2' ? '#ffffff' : track.mini} />)}
            </g>
        ))}
    </svg>
);

const Chevron = ({ turn }: { turn: string }) => (
    <svg viewBox="0 0 16 16" className={clsx('size-[16px]', turn)} fill="none" stroke="#20282e" strokeWidth="2" aria-hidden="true">
        <path d="M2 11L8 5L14 11" />
    </svg>
);

const boxed = 'flex shrink-0 items-center justify-center border-2 border-[#667077] bg-[#505a61]';
const hatch = 'bg-[repeating-linear-gradient(45deg,#333b42_0_2px,#394148_2px_4px)]';

const ScrollColumn = ({ thumb, wide }: { thumb: string; wide?: boolean }) => (
    <div className={clsx('flex shrink-0 flex-col gap-[2px]', hatch, wide ? 'w-[33px]' : 'w-[28px]')}>
        <div className={clsx(boxed, wide ? 'h-[38px]' : 'h-[27px]')}><i className="h-[9px] w-[4px] bg-[#20282e]" /></div>
        <button type="button" aria-label="Scroll up" className={clsx(boxed, wide ? 'h-[38px]' : 'h-[26px]')}><Chevron turn="rotate-0" /></button>
        <div className={clsx(boxed, thumb)} />
        <div className="flex-1" />
        <button type="button" aria-label="Scroll down" className={clsx(boxed, 'h-[26px]')}><Chevron turn="rotate-180" /></button>
    </div>
);

const Toolbar = () => (
    <header className="flex h-[55px] shrink-0 items-center pl-[14px] text-[#d3dade]">
        <span className="mr-[21px] ml-[14px] border-y-[9px] border-l-[9px] border-y-transparent border-l-current" />
        {tools.map((tool) => (
            <button key={tool.name} type="button" aria-label={tool.name} className={clsx('shrink-0', tool.gap, tool.blue && 'text-[#6cc4ff]')}>
                <svg viewBox="0 0 28 28" className="size-[28px]" fill="currentColor">{tool.art}</svg>
            </button>
        ))}
        <h1 className="ml-[12px] flex items-center font-['Noto_Sans',sans-serif] text-[26px] leading-[30px] whitespace-nowrap">
            Playlist - Arrangement
            <span className="mr-[14px] ml-[19px] border-y-[8px] border-l-[8px] border-y-transparent border-l-[#7b858b]" />
            hi eq vox girl
            <span className="mx-[20px] border-y-[8px] border-l-[8px] border-y-transparent border-l-[#7b858b]" />
        </h1>
        <div className="ml-auto flex items-start gap-[20px]">
            <button type="button" aria-label="Minimize" className="mt-[2px] h-[4px] w-[14px] bg-current" />
            <button type="button" aria-label="Maximize" className="mt-[2px] h-[16px] w-[19px] border-2 border-t-4 border-current" />
            <button type="button" aria-label="Close">
                <svg viewBox="0 0 20 20" className="size-[20px]" stroke="currentColor" strokeWidth="4"><path d="M2 2L18 18M18 2L2 18" /></svg>
            </button>
        </div>
    </header>
);

const Browser = () => (
    <aside className="mr-[10px] flex min-h-0 w-[312px] shrink-0 flex-col">
        <div className="flex h-[80px] shrink-0 items-center justify-between pt-[24px] pr-[58px] pl-[31px] text-[#4d575e]">
            <button type="button" aria-label="Patterns"><PianoIcon className="h-[22px] w-[32px]" /></button>
            <button type="button" aria-label="Audio clips" className="text-[#d6dde1]"><WaveIcon className="h-[28px] w-[40px]" /></button>
            <button type="button" aria-label="Automation clips"><NodeIcon className="h-[26px] w-[34px]" /></button>
        </div>
        <div className="flex min-h-0 flex-1 justify-between border-2 border-[#212b32] bg-[#333d45]">
            <ul className="flex min-w-0 flex-1 flex-col gap-[6px] overflow-hidden pt-[6px] pr-[3px] pl-[5px]">
                {samples.map((s, i) => (
                    <li key={s.name + i} className={clsx('relative flex h-[56px] shrink-0 items-center rounded-[3px] border border-t-white/30 border-r-black/20 border-b-black/20 border-l-white/20 bg-linear-to-b pr-[4px] pl-[6px]', s.look)}>
                        <svg viewBox="0 0 100 100" preserveAspectRatio="none" className="absolute inset-y-[2px] left-[3px] h-[50px] w-[262px] opacity-25" aria-hidden="true">
                            <path d={wavePath(i + 2, 130, s.env, 0.4)} fill="#101010" />
                        </svg>
                        <span className={clsx('relative min-w-0 flex-1 text-[23px] leading-[30px] whitespace-pre', s.bold ? 'font-medium' : 'font-normal', s.pad && 'pl-[6px]')}>{s.name}</span>
                        <WaveIcon className={clsx('relative h-[25px] w-[32px] shrink-0', s.icon)} />
                    </li>
                ))}
            </ul>
            <div className="flex border-l-2 border-[#212b32]"><ScrollColumn thumb="h-[706px]" /></div>
        </div>
    </aside>
);

const PlaylistTop = () => (
    <div className="flex h-[82px] shrink-0 border-b-2 border-[#1f2930]">
        <div className="flex w-[222px] shrink-0 gap-[2px] pt-[2px] pb-0">
            <button type="button" aria-label="Add track" className="flex w-[58px] items-end justify-center rounded-tl-[22px] border-2 border-[#667077] bg-[#4c565d] pb-[6px] pl-[6px] text-[30px] leading-[28px] font-bold text-[#e0e6ea]">+</button>
            <div className="flex flex-1 flex-col justify-between border-2 border-[#667077] bg-[#4c565d] px-[9px] pt-[4px] pb-[4px]">
                <div className="flex items-center justify-between text-[#707a81]">
                    <WaveIcon className="h-[28px] w-[38px]" />
                    <NodeIcon className="h-[26px] w-[32px] text-[#e3e9ec]" />
                    <PianoIcon className="h-[22px] w-[30px]" />
                </div>
                <div className="flex items-center justify-between pl-[6px] text-[13px] leading-[20px] text-[#e3e9ec]">
                    <label className="flex items-center gap-px">
                        STEP
                        <input type="checkbox" className="size-[21px] appearance-none rounded-[7px] border-2 border-[#98a2a8]" />
                    </label>
                    <label className="flex items-center gap-[2px]">
                        SLIDE
                        <input type="radio" defaultChecked className="size-[16px] appearance-none rounded-full border-[5px] border-[#737d84] bg-[#e3e9ec]" />
                    </label>
                </div>
            </div>
        </div>
        <div className="flex min-w-0 flex-1 flex-col">
            <div className="flex h-[40px] bg-[#363f46] pt-[2px]">
                <button type="button" aria-label="Scroll left" className={clsx(boxed, 'w-[38px]')}><Chevron turn="-rotate-90" /></button>
                <div className="ml-[2px] flex min-w-0 flex-1">
                    <div className="min-w-0 flex-1 border-2 border-[#6d787d] bg-[#505d63]"><Overview /></div>
                    <div className="w-[5%]" />
                </div>
                <button type="button" aria-label="Scroll right" className={clsx(boxed, 'w-[38px]')}><Chevron turn="rotate-90" /></button>
            </div>
            <div className="relative mt-[2px] flex-1 overflow-hidden bg-[#1f2b33]">
                <div className="absolute inset-y-0 border-t-2 border-[#c47a7c] bg-linear-to-b from-[#a65c5e] to-[#995254]" style={place(1, 209)} />
                {rulerBars.map((bar) => (
                    <span key={bar} className={clsx('absolute top-0 text-[19px] leading-[40px] font-medium', bar < 209 ? 'text-[#ffccc8]' : 'text-[#8b969c]')} style={{ left: place(bar, bar).left }}>{bar}</span>
                ))}
                <svg viewBox="0 0 18 24" className="absolute top-[2px] left-0 h-[22px] w-[17px]" fill="#b9dc6a" stroke="#33481a" strokeWidth="2" aria-hidden="true">
                    <path d="M0 2H16V7Q10 18 0 20Z" />
                </svg>
            </div>
        </div>
    </div>
);

const Grid = () => (
    <div className="absolute inset-y-0 right-0 left-[222px] overflow-hidden bg-[#3e444d]" aria-hidden="true">
        {gridCells.map((bar) => (
            <div key={bar} className={clsx('absolute inset-y-0 border-l-2 border-[#212832]', bar >= 209 ? 'bg-[#2f424c]' : (bar - 1) % 16 < 8 ? 'bg-[#434951]' : 'bg-[#3c424b]')} style={place(bar, bar + 2)} />
        ))}
        <div className="absolute inset-y-0 right-0 bg-[#2f424c]" style={{ left: place(213, 213).left }} />
    </div>
);

export default function App() {
    return (
        <div className="flex h-screen flex-col overflow-hidden border-t-2 border-[#59636a] bg-[#414a50] font-['Roboto','Liberation_Sans',sans-serif]">
            <div className="flex min-h-0 flex-1 border-t border-[#272f35]">
                <div className="flex w-[16px] shrink-0 flex-col items-center justify-center gap-[4px] border-r-2 border-[#2b343a] bg-[#454e54]">
                    {[0, 1, 2, 3, 4].map((n) => <i key={n} className="h-[4px] w-[4px] bg-[#2b343a]" />)}
                </div>
                <div className="flex min-w-0 flex-1 flex-col">
                    <Toolbar />
                    <div className="flex min-h-0 flex-1 pl-[12px]">
                        <Browser />
                        <main className="flex min-h-0 min-w-0 flex-1 flex-col border-b-2 border-l-2 border-[#212b32]">
                            <PlaylistTop />
                            <div className="relative flex min-h-0 flex-1 flex-col">
                                <Grid />
                                {tracks.map((track) => (
                                    <div key={track.name} className={clsx('relative flex shrink-0', track.height)}>
                                        <TrackHeader track={track} />
                                        <div className="relative min-w-0 flex-1 overflow-hidden border-b-2 border-[#1d232b]/80">
                                            {track.dense && track.segs && <Dense kind={track.dense} segs={track.segs} />}
                                            {track.clips?.map((clip) => <ClipView key={`${clip.s}-${clip.e}-${clip.tone}`} clip={clip} big={track.big} />)}
                                        </div>
                                    </div>
                                ))}
                            </div>
                        </main>
                        <div className="flex border-l-2 border-[#212b32] pt-[2px]"><ScrollColumn wide thumb="h-[66px]" /></div>
                    </div>
                    <footer className="h-[14px] shrink-0 border-b-2 border-[#2b343a]" />
                </div>
            </div>
        </div>
    );
}
